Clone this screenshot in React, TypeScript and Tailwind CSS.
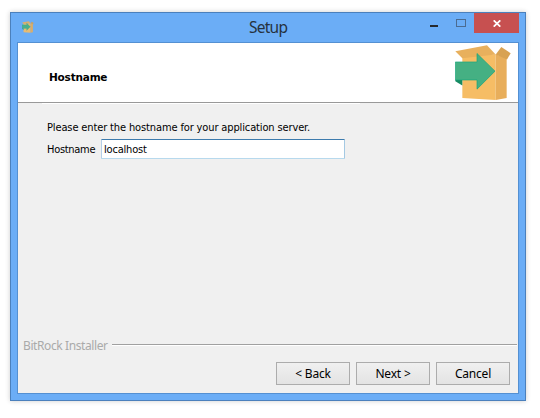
import React from "react";

function BoxIcon({ className }: { className: string }) {
  return (
    <svg className={className} viewBox="0 0 171 168" preserveAspectRatio="none" aria-hidden="true">
      <path d="M22 37L122 30V165L22 159Z" fill="#f6bd65" />
      <path d="M122 30L155 42V159L122 165Z" fill="#e8ae5b" />
      <path d="M1 21L96 4L122 31L22 42Z" fill="#e8b05d" />
      <path d="M122 31L139 9L167 27L156 46Z" fill="#d8a252" />
      <path d="M1 106L22 106V122L1 110Z" fill="#168a62" />
      <path d="M1 53H66V28L120 80L66 133V106H1Z" fill="#45b083" stroke="#16a67c" strokeWidth="2" />
    </svg>
  );
}

function PushButton({ children }: { children: string }) {
  return (
    <button className="flex h-[23px] w-[74px] items-center justify-center border border-[#acacac] bg-linear-to-b from-[#f0f0f0] to-[#e3e3e3] font-['Noto_Sans',sans-serif] text-[12px] leading-4 tracking-[-0.2px] whitespace-nowrap">
      {children}
    </button>
  );
}

export default function App() {
  return (
    <main className="h-[418px] w-[540px] overflow-hidden bg-white pt-3 pl-2.5 font-['DejaVu_Sans_Condensed','DejaVu_Sans',sans-serif] text-[11px] text-black">
      <section className="h-[389px] w-[516px] border border-[#4b80bc] bg-[#6badf6] shadow-[0_0_5px_rgba(0,0,0,0.2)]">
        <header className="flex h-[29px] items-start pl-[11px]">
          <BoxIcon className="mt-2 h-3 w-3 opacity-90" />
          <h1 className="ml-[215px] w-[60px] pt-[2px] font-['Noto_Sans',sans-serif] text-[15.5px] leading-6 tracking-[-0.75px] whitespace-nowrap text-[#26323e]">Setup</h1>
          <div className="mt-3 ml-[121px] h-0.5 w-2 bg-[#26292d]" />
          <div className="mt-1.5 ml-[18px] h-2 w-2.5 border border-[#4b6b91]" />
          <button aria-label="Close" className="ml-2 flex h-5 w-[45px] items-center justify-center bg-[#c75050]">
            <svg className="h-[7px] w-2" viewBox="0 0 8 7" stroke="white" strokeWidth="1.7" aria-hidden="true">
              <path d="M.7 .3L7.3 6.7M7.3 .3L.7 6.7" />
            </svg>
          </button>
        </header>
        <div className="ml-1.5 flex h-[352px] w-[502px] flex-col border border-[#5490d2] bg-[#f0f0f0]">
          <div className="flex h-[60px] shrink-0 items-start justify-between border-b border-[#999] bg-white pr-[6px] pl-[31px]">
            <h2 className="mt-[27px] font-['DejaVu_Sans',sans-serif] text-[10.5px] leading-[14px] font-bold tracking-[-0.2px] whitespace-nowrap">Hostname</h2>
            <BoxIcon className="mt-px h-[57px] w-[57px]" />
          </div>
          <div className="ml-6 h-px w-[318px] shrink-0 bg-white" />
          <div className="h-[240px] shrink-0 pt-[17px] pl-[29px]">
            <p className="leading-[14px] tracking-[-0.13px] whitespace-nowrap">Please enter the hostname for your application server.</p>
            <label className="mt-1 flex h-5 items-center">
              <span className="w-[54px] pt-px leading-[14px] tracking-[-0.3px]">Hostname</span>
              <input defaultValue="localhost" className="h-5 w-[244px] rounded-[1px] border border-t-[#3d7bad] border-r-[#a4c9e3] border-b-[#b7d9ed] border-l-[#b5cfe7] bg-white px-[2px] leading-[14px] tracking-[-0.2px] outline-none" />
            </label>
          </div>
          <div className="-mt-[7px] flex h-4 shrink-0 items-center pl-[5px]">
            <span className="w-[89px] pt-0.5 font-['Noto_Sans',sans-serif] text-[12px] leading-4 tracking-[-0.4px] whitespace-nowrap text-[#aaa]">BitRock Installer</span>
            <div className="h-0.5 w-[405px] border-t border-[#a0a0a0] bg-white" />
          </div>
          <div className="mt-[9px] flex justify-end gap-1.5 pr-2">
            <PushButton>&lt; Back</PushButton>
            <PushButton>Next &gt;</PushButton>
            <PushButton>Cancel</PushButton>
          </div>
        </div>
      </section>
    </main>
  );
}
